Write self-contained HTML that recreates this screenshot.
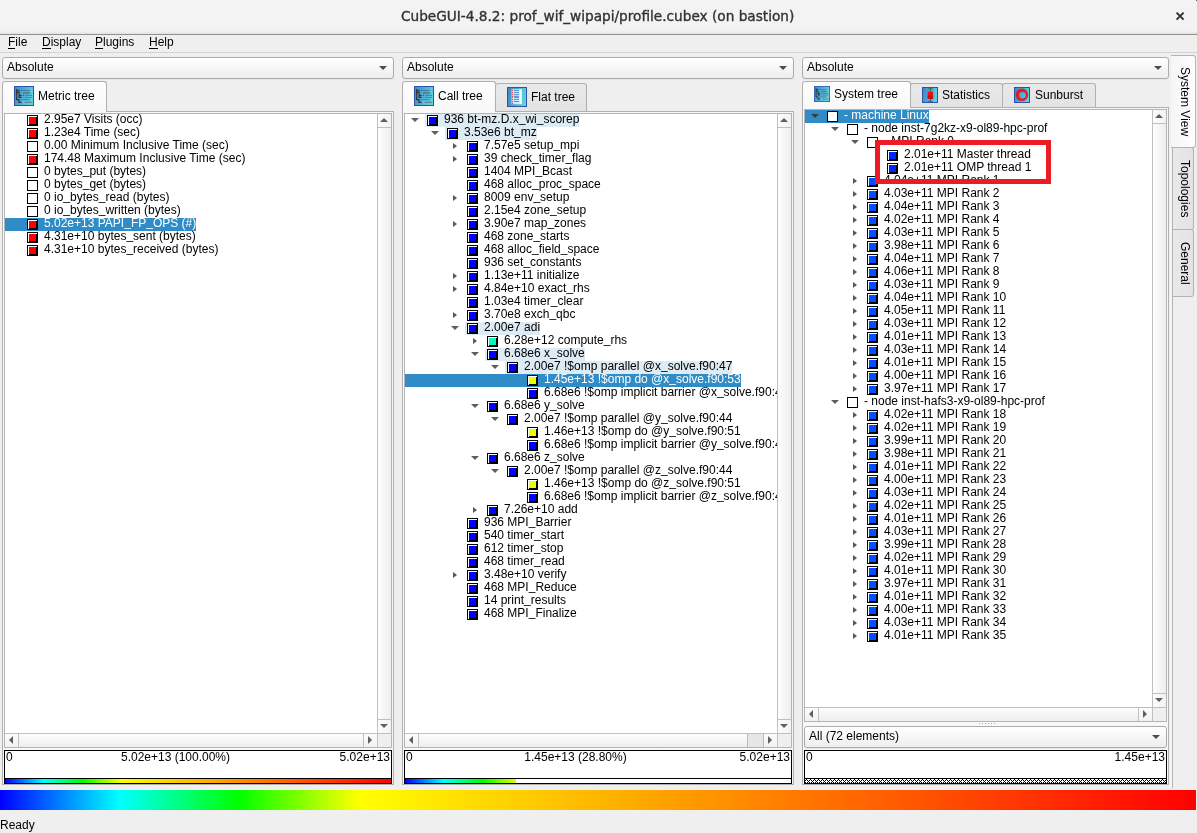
<!DOCTYPE html><html><head><meta charset="utf-8"><title>CubeGUI-4.8.2</title><style>
*{box-sizing:border-box}
html,body{margin:0;padding:0}
body{width:1197px;height:833px;position:relative;overflow:hidden;background:#efefef;
 font:12px "Liberation Sans",sans-serif;color:#000}
div,span,i,b,svg{position:absolute}
#root{left:0;top:0;width:1197px;height:833px;will-change:transform}
.t{white-space:pre;line-height:13px;height:13px}
em{font-style:normal;position:relative;top:-1px}
u{text-decoration:none;border-bottom:1px solid #000;display:inline-block;line-height:11px;height:12px}
.titlebar{left:0;top:0;width:1197px;height:35px;background:linear-gradient(#f3f3f3 0,#f3f3f3 31px,#ececec 32px,#e2e2e2 34px,#e2e2e2 100%)}
.tline{left:0;top:34px;width:1197px;height:1px;background:#91928b}
.title{left:401px;top:6px;font:13.66px "DejaVu Sans","Liberation Sans",sans-serif;color:#2e3436;white-space:pre;line-height:20px;-webkit-text-stroke:0.35px #2e3436}
.mline{left:0;top:52px;width:1197px;height:1px;background:#d4d4d4}
.combo{border:1px solid #ababab;border-radius:3px;background:linear-gradient(#ffffff,#eeeeee);box-shadow:0 1px 0 #e6e6e6}
.pane{border:1px solid #b0b0b0;background:#f8f8f8}
.frame{border:1px solid #b4b4b4;background:#fff;overflow:hidden}
.tab{border:1px solid #b0b0b0;border-bottom:none;border-radius:3px 3px 0 0}
.tab.sel{background:linear-gradient(#fdfdfd,#f8f8f8)}
.tab.in{background:linear-gradient(#e9e9e9,#e3e3e3)}
.ic{width:11px;height:11px;background:linear-gradient(var(--c),var(--c)) 2px 2px/7px 7px no-repeat,linear-gradient(#000,#000) 2px 2px/8px 8px no-repeat,linear-gradient(#fff,#fff) 1px 1px/9px 9px no-repeat,#000}
.ie{width:11px;height:11px;border:1px solid #000;background:#fff}
.hl{background:#ddebf5;height:13px}
.sel{background:#308cc6;height:13px}
.w{color:#fff}
.ad{width:0;height:0;border-left:4px solid transparent;border-right:4px solid transparent;border-top:4px solid #5e5e5e}
.ar{width:0;height:0;border-top:3.5px solid transparent;border-bottom:3.5px solid transparent;border-left:4px solid #595959}
.al{width:0;height:0;border-top:4px solid transparent;border-bottom:4px solid transparent;border-right:4px solid #606060}
.au{width:0;height:0;border-left:4px solid transparent;border-right:4px solid transparent;border-bottom:4px solid #606060}
.adk{border-top-color:#4d4d4d}
.sb{background:#c0c0c0}
.vbox{border:1px solid #000;background:#fff;height:34px}
.vbar{left:0;bottom:0;height:5px;border-top:1px solid #000}
.vt{top:0;white-space:pre;line-height:13px}
.rot{white-space:pre;line-height:14px;transform-origin:0 0;transform:rotate(90deg)}
</style></head><body><div id="root">
<div class="titlebar"></div><div class="tline"></div>
<span class="title">CubeGUI-4.8.2: prof_wif_wipapi/profile.cubex (on bastion)</span>
<svg style="left:1174px;top:10px" width="12" height="12" viewBox="0 0 12 12"><path d="M2.6 2.6 L9.6 9.6 M9.6 2.6 L2.6 9.6" stroke="#2e3436" stroke-width="2" fill="none"/></svg>
<div style="left:1196px;top:0;width:1px;height:1px;background:#5a5a5a"></div><div style="left:0;top:0;width:1px;height:1px;background:#fff"></div>
<span class="t " style="left:8px;top:36px;"><u>F</u>ile</span>
<span class="t " style="left:42px;top:36px;"><u>D</u>isplay</span>
<span class="t " style="left:95px;top:36px;"><u>P</u>lugins</span>
<span class="t " style="left:149px;top:36px;"><u>H</u>elp</span>
<div class="mline"></div>
<div class="combo" style="left:2px;top:57px;width:392px;height:22px"></div>
<span class="t " style="left:7px;top:61px;">Absolute</span>
<i class="ad adk" style="left:379px;top:66px"></i>
<div class="pane" style="left:2px;top:111px;width:392px;height:674px"></div>
<div class="tab sel" style="left:2px;top:81px;width:105px;height:31px"></div>
<svg style="left:14px;top:86px" width="20" height="20" viewBox="0 0 20 20"><defs><linearGradient id="g1" x1="0" y1="0" x2="1" y2="0.3"><stop offset="0" stop-color="#3a88cc"/><stop offset="1" stop-color="#5fcfe0"/></linearGradient></defs><rect x="0.5" y="0.5" width="19" height="19" fill="url(#g1)" stroke="#2b55ad"/><path d="M2.6 3 V13.6 H4.9 V16.3 H7.6 M2.6 4.5 H5.6 M2.6 6.3 H5.1 V11.4 H7.7 M5.1 9.4 H7.5" stroke="#33363c" stroke-width="1.25" fill="none"/><rect x="9" y="6.1" width="7" height="1.8" fill="#5b8da6" opacity="0.85"/><g stroke="#4f6873" stroke-width="0.9" opacity="0.85"><path d="M9 4.5H16M9 7H16M11 9.4H18M11 11.4H18M9 13.6H16M11 16.3H18"/></g><rect x="6.9" y="4" width="1.1" height="1.1" fill="#3040e0"/><rect x="6.8" y="6.2" width="1.3" height="1.6" fill="#30d060"/><rect x="8.9" y="8.9" width="1.1" height="1.1" fill="#3848d8"/><rect x="8.8" y="10.8" width="1.3" height="1.3" fill="#20e040"/><rect x="6.9" y="13" width="1.1" height="1.3" fill="#d03050"/><rect x="8.9" y="15.7" width="1.1" height="1.3" fill="#e0c030"/></svg>
<span class="t " style="left:38px;top:90px;">Metric tree</span>
<div class="frame" style="left:4px;top:113px;width:388px;height:635px"></div>
<div style="left:5px;top:114px;width:372px;height:145px;overflow:hidden">
<i class="ic" style="left:22px;top:1px;--c:#ff0000"></i>
<span class="t" style="left:39px;top:-1px">2.95e7 Visits (occ)</span>
<i class="ic" style="left:22px;top:14px;--c:#ff0000"></i>
<span class="t" style="left:39px;top:12px">1.23e4 Time (sec)</span>
<i class="ie" style="left:22px;top:27px"></i>
<span class="t" style="left:39px;top:25px">0.00 Minimum Inclusive Time (sec)</span>
<i class="ic" style="left:22px;top:40px;--c:#ff0000"></i>
<span class="t" style="left:39px;top:38px">174.48 Maximum Inclusive Time (sec)</span>
<i class="ie" style="left:22px;top:53px"></i>
<span class="t" style="left:39px;top:51px">0 bytes<em>_</em>put (bytes)</span>
<i class="ie" style="left:22px;top:66px"></i>
<span class="t" style="left:39px;top:64px">0 bytes<em>_</em>get (bytes)</span>
<i class="ie" style="left:22px;top:79px"></i>
<span class="t" style="left:39px;top:77px">0 io<em>_</em>bytes<em>_</em>read (bytes)</span>
<i class="ie" style="left:22px;top:92px"></i>
<span class="t" style="left:39px;top:90px">0 io<em>_</em>bytes<em>_</em>written (bytes)</span>
<div class="sel" style="left:0;top:104px;width:191px"></div>
<i class="ic" style="left:22px;top:105px;--c:#ff0000"></i>
<span class="t w" style="left:39px;top:103px">5.02e+13 PAPI<em>_</em>FP<em>_</em>OPS (#)</span>
<i class="ic" style="left:22px;top:118px;--c:#ff0000"></i>
<span class="t" style="left:39px;top:116px">4.31e+10 bytes<em>_</em>sent (bytes)</span>
<i class="ic" style="left:22px;top:131px;--c:#ff0000"></i>
<span class="t" style="left:39px;top:129px">4.31e+10 bytes<em>_</em>received (bytes)</span>
</div>
<div style="left:377px;top:114px;width:14px;height:619px;background:linear-gradient(to right,#fdfdfd,#eeeeee);border-left:1px solid #c0c0c0"></div>
<div style="left:378px;top:114px;width:13px;height:14px;background:linear-gradient(to right,#fcfcfc,#f2f2f2);border-bottom:1px solid #c0c0c0"></div>
<i class="au" style="left:380px;top:118px"></i>
<div style="left:378px;top:719px;width:13px;height:14px;background:linear-gradient(to right,#fcfcfc,#f2f2f2);border-top:1px solid #c0c0c0"></div>
<i class="ad" style="left:380px;top:724px;border-top-color:#606060"></i>
<div style="left:5px;top:733px;width:372px;height:14px;background:linear-gradient(#fdfdfd,#eeeeee);border-top:1px solid #c0c0c0"></div>
<div style="left:5px;top:734px;width:14px;height:13px;background:linear-gradient(#fcfcfc,#f2f2f2);border-right:1px solid #c0c0c0"></div>
<i class="al" style="left:9px;top:736px"></i>
<div style="left:363px;top:734px;width:14px;height:13px;background:linear-gradient(#fcfcfc,#f2f2f2);border-left:1px solid #c0c0c0"></div>
<i class="ar" style="left:368px;top:736px;border-left-color:#606060;border-top-width:4px;border-bottom-width:4px"></i>
<div style="left:377px;top:733px;width:14px;height:14px;background:#efefef;border-left:1px solid #c0c0c0;border-top:1px solid #c0c0c0"></div>
<div class="vbox" style="left:4px;top:750px;width:388px">
<span class="vt" style="left:1px">0</span>
<span class="vt" style="left:0;width:341px;text-align:center">5.02e+13 (100.00%)</span>
<span class="vt" style="right:1px">5.02e+13</span>
<div class="vbar" style="width:386px;background:#fff"></div>
<div style="left:0;bottom:0;height:4px;width:386px;background:linear-gradient(to right,#0000ff 0%,#00ffff 10%,#00ff00 20%,#ffff00 30%,#ff0000 100%) 0 0/386px 100% no-repeat"></div>
</div>
<div class="combo" style="left:402px;top:57px;width:392px;height:22px"></div>
<span class="t " style="left:407px;top:61px;">Absolute</span>
<i class="ad adk" style="left:779px;top:66px"></i>
<div class="pane" style="left:402px;top:111px;width:392px;height:674px"></div>
<div class="tab in" style="left:495px;top:83px;width:92px;height:28px"></div>
<div class="tab sel" style="left:402px;top:81px;width:94px;height:31px"></div>
<svg style="left:414px;top:86px" width="20" height="20" viewBox="0 0 20 20"><defs><linearGradient id="g2" x1="0" y1="0" x2="1" y2="0.3"><stop offset="0" stop-color="#3a88cc"/><stop offset="1" stop-color="#5fcfe0"/></linearGradient></defs><rect x="0.5" y="0.5" width="19" height="19" fill="url(#g2)" stroke="#2b55ad"/><path d="M2.6 3 V13.6 H4.9 V16.3 H7.6 M2.6 4.5 H5.6 M2.6 6.3 H5.1 V11.4 H7.7 M5.1 9.4 H7.5" stroke="#33363c" stroke-width="1.25" fill="none"/><rect x="9" y="6.1" width="7" height="1.8" fill="#5b8da6" opacity="0.85"/><g stroke="#4f6873" stroke-width="0.9" opacity="0.85"><path d="M9 4.5H16M9 7H16M11 9.4H18M11 11.4H18M9 13.6H16M11 16.3H18"/></g><rect x="6.9" y="4" width="1.1" height="1.1" fill="#3040e0"/><rect x="6.8" y="6.2" width="1.3" height="1.6" fill="#30d060"/><rect x="8.9" y="8.9" width="1.1" height="1.1" fill="#3848d8"/><rect x="8.8" y="10.8" width="1.3" height="1.3" fill="#20e040"/><rect x="6.9" y="13" width="1.1" height="1.3" fill="#d03050"/><rect x="8.9" y="15.7" width="1.1" height="1.3" fill="#e0c030"/></svg>
<span class="t " style="left:438px;top:90px;">Call tree</span>
<svg style="left:507px;top:87px" width="20" height="20" viewBox="0 0 20 20"><defs><linearGradient id="g3" x1="0" y1="0" x2="1" y2="0.2"><stop offset="0" stop-color="#3a84c8"/><stop offset="1" stop-color="#60d0e0"/></linearGradient></defs><rect x="0.5" y="0.5" width="19" height="19" fill="url(#g3)" stroke="#2b55ad"/><rect x="4.6" y="2.2" width="10.4" height="15" fill="#d6eaf8" opacity="0.95"/><rect x="12.6" y="2.6" width="2.2" height="14" fill="#f4fafe"/><g stroke="#3d8fd8" stroke-width="0.9"><path d="M7 3.4H12M7 5.5H12M7 7.6H12M7 9.4H12M7 10.4H12M7 12.4H12M7 14.5H12"/></g><g fill="#f04040"><rect x="5" y="2.9" width="1.1" height="1.1"/><rect x="5" y="5" width="1.1" height="1.1"/><rect x="5" y="7.1" width="1.1" height="1.1"/><rect x="5" y="9" width="1.1" height="1.6"/><rect x="5" y="11.9" width="1.1" height="1.1"/><rect x="5" y="14" width="1.1" height="1.1"/><rect x="5" y="15.9" width="1.1" height="1.1"/></g></svg>
<span class="t " style="left:531px;top:91px;">Flat tree</span>
<div class="frame" style="left:404px;top:113px;width:388px;height:635px"></div>
<div style="left:405px;top:114px;width:372px;height:509px;overflow:hidden">
<div class="hl" style="left:20px;top:0px;width:154px"></div>
<i class="ad" style="left:6px;top:4.4px;"></i>
<i class="ic" style="left:22px;top:1px;--c:#0000ff"></i>
<span class="t" style="left:39px;top:-1px">936 bt-mz.D.x<em>_</em>wi<em>_</em>scorep</span>
<div class="hl" style="left:40px;top:13px;width:92px"></div>
<i class="ad" style="left:26px;top:17.4px;"></i>
<i class="ic" style="left:42px;top:14px;--c:#0000ff"></i>
<span class="t" style="left:59px;top:12px">3.53e6 bt<em>_</em>mz</span>
<i class="ar" style="left:48px;top:29px"></i>
<i class="ic" style="left:62px;top:27px;--c:#0000ff"></i>
<span class="t" style="left:79px;top:25px">7.57e5 setup<em>_</em>mpi</span>
<i class="ar" style="left:48px;top:42px"></i>
<i class="ic" style="left:62px;top:40px;--c:#0000ff"></i>
<span class="t" style="left:79px;top:38px">39 check<em>_</em>timer<em>_</em>flag</span>
<i class="ic" style="left:62px;top:53px;--c:#0000ff"></i>
<span class="t" style="left:79px;top:51px">1404 MPI<em>_</em>Bcast</span>
<i class="ic" style="left:62px;top:66px;--c:#0000ff"></i>
<span class="t" style="left:79px;top:64px">468 alloc<em>_</em>proc<em>_</em>space</span>
<i class="ar" style="left:48px;top:81px"></i>
<i class="ic" style="left:62px;top:79px;--c:#0000ff"></i>
<span class="t" style="left:79px;top:77px">8009 env<em>_</em>setup</span>
<i class="ic" style="left:62px;top:92px;--c:#0000ff"></i>
<span class="t" style="left:79px;top:90px">2.15e4 zone<em>_</em>setup</span>
<i class="ar" style="left:48px;top:107px"></i>
<i class="ic" style="left:62px;top:105px;--c:#0000ff"></i>
<span class="t" style="left:79px;top:103px">3.90e7 map<em>_</em>zones</span>
<i class="ic" style="left:62px;top:118px;--c:#0000ff"></i>
<span class="t" style="left:79px;top:116px">468 zone<em>_</em>starts</span>
<i class="ic" style="left:62px;top:131px;--c:#0000ff"></i>
<span class="t" style="left:79px;top:129px">468 alloc<em>_</em>field<em>_</em>space</span>
<i class="ic" style="left:62px;top:144px;--c:#0000ff"></i>
<span class="t" style="left:79px;top:142px">936 set<em>_</em>constants</span>
<i class="ar" style="left:48px;top:159px"></i>
<i class="ic" style="left:62px;top:157px;--c:#0000ff"></i>
<span class="t" style="left:79px;top:155px">1.13e+11 initialize</span>
<i class="ar" style="left:48px;top:172px"></i>
<i class="ic" style="left:62px;top:170px;--c:#0000ff"></i>
<span class="t" style="left:79px;top:168px">4.84e+10 exact<em>_</em>rhs</span>
<i class="ic" style="left:62px;top:183px;--c:#0000ff"></i>
<span class="t" style="left:79px;top:181px">1.03e4 timer<em>_</em>clear</span>
<i class="ar" style="left:48px;top:198px"></i>
<i class="ic" style="left:62px;top:196px;--c:#0000ff"></i>
<span class="t" style="left:79px;top:194px">3.70e8 exch<em>_</em>qbc</span>
<div class="hl" style="left:60px;top:208px;width:75px"></div>
<i class="ad" style="left:46px;top:212.4px;"></i>
<i class="ic" style="left:62px;top:209px;--c:#0000ff"></i>
<span class="t" style="left:79px;top:207px">2.00e7 adi</span>
<i class="ar" style="left:68px;top:224px"></i>
<i class="ic" style="left:82px;top:222px;--c:#00ffbf"></i>
<span class="t" style="left:99px;top:220px">6.28e+12 compute<em>_</em>rhs</span>
<div class="hl" style="left:80px;top:234px;width:100px"></div>
<i class="ad" style="left:66px;top:238.4px;"></i>
<i class="ic" style="left:82px;top:235px;--c:#0000ff"></i>
<span class="t" style="left:99px;top:233px">6.68e6 x<em>_</em>solve</span>
<div class="hl" style="left:100px;top:247px;width:227px"></div>
<i class="ad" style="left:86px;top:251.4px;"></i>
<i class="ic" style="left:102px;top:248px;--c:#0000ff"></i>
<span class="t" style="left:119px;top:246px">2.00e7 !$omp parallel @x<em>_</em>solve.f90:47</span>
<div class="sel" style="left:0;top:260px;width:336px"></div>
<i class="ic" style="left:122px;top:261px;--c:#e6ff00"></i>
<span class="t w" style="left:139px;top:259px">1.45e+13 !$omp do @x<em>_</em>solve.f90:53</span>
<i class="ic" style="left:122px;top:274px;--c:#0000ff"></i>
<span class="t" style="left:139px;top:272px">6.68e6 !$omp implicit barrier @x<em>_</em>solve.f90:4</span>
<i class="ad" style="left:66px;top:290.4px;"></i>
<i class="ic" style="left:82px;top:287px;--c:#0000ff"></i>
<span class="t" style="left:99px;top:285px">6.68e6 y<em>_</em>solve</span>
<i class="ad" style="left:86px;top:303.4px;"></i>
<i class="ic" style="left:102px;top:300px;--c:#0000ff"></i>
<span class="t" style="left:119px;top:298px">2.00e7 !$omp parallel @y<em>_</em>solve.f90:44</span>
<i class="ic" style="left:122px;top:313px;--c:#e6ff00"></i>
<span class="t" style="left:139px;top:311px">1.46e+13 !$omp do @y<em>_</em>solve.f90:51</span>
<i class="ic" style="left:122px;top:326px;--c:#0000ff"></i>
<span class="t" style="left:139px;top:324px">6.68e6 !$omp implicit barrier @y<em>_</em>solve.f90:4</span>
<i class="ad" style="left:66px;top:342.4px;"></i>
<i class="ic" style="left:82px;top:339px;--c:#0000ff"></i>
<span class="t" style="left:99px;top:337px">6.68e6 z<em>_</em>solve</span>
<i class="ad" style="left:86px;top:355.4px;"></i>
<i class="ic" style="left:102px;top:352px;--c:#0000ff"></i>
<span class="t" style="left:119px;top:350px">2.00e7 !$omp parallel @z<em>_</em>solve.f90:44</span>
<i class="ic" style="left:122px;top:365px;--c:#e6ff00"></i>
<span class="t" style="left:139px;top:363px">1.46e+13 !$omp do @z<em>_</em>solve.f90:51</span>
<i class="ic" style="left:122px;top:378px;--c:#0000ff"></i>
<span class="t" style="left:139px;top:376px">6.68e6 !$omp implicit barrier @z<em>_</em>solve.f90:4</span>
<i class="ar" style="left:68px;top:393px"></i>
<i class="ic" style="left:82px;top:391px;--c:#0000ff"></i>
<span class="t" style="left:99px;top:389px">7.26e+10 add</span>
<i class="ic" style="left:62px;top:404px;--c:#0000ff"></i>
<span class="t" style="left:79px;top:402px">936 MPI<em>_</em>Barrier</span>
<i class="ic" style="left:62px;top:417px;--c:#0000ff"></i>
<span class="t" style="left:79px;top:415px">540 timer<em>_</em>start</span>
<i class="ic" style="left:62px;top:430px;--c:#0000ff"></i>
<span class="t" style="left:79px;top:428px">612 timer<em>_</em>stop</span>
<i class="ic" style="left:62px;top:443px;--c:#0000ff"></i>
<span class="t" style="left:79px;top:441px">468 timer<em>_</em>read</span>
<i class="ar" style="left:48px;top:458px"></i>
<i class="ic" style="left:62px;top:456px;--c:#0000ff"></i>
<span class="t" style="left:79px;top:454px">3.48e+10 verify</span>
<i class="ic" style="left:62px;top:469px;--c:#0000ff"></i>
<span class="t" style="left:79px;top:467px">468 MPI<em>_</em>Reduce</span>
<i class="ic" style="left:62px;top:482px;--c:#0000ff"></i>
<span class="t" style="left:79px;top:480px">14 print<em>_</em>results</span>
<i class="ic" style="left:62px;top:495px;--c:#0000ff"></i>
<span class="t" style="left:79px;top:493px">468 MPI<em>_</em>Finalize</span>
</div>
<div style="left:777px;top:114px;width:14px;height:619px;background:linear-gradient(to right,#fdfdfd,#eeeeee);border-left:1px solid #c0c0c0"></div>
<div style="left:778px;top:114px;width:13px;height:14px;background:linear-gradient(to right,#fcfcfc,#f2f2f2);border-bottom:1px solid #c0c0c0"></div>
<i class="au" style="left:780px;top:118px"></i>
<div style="left:778px;top:719px;width:13px;height:14px;background:linear-gradient(to right,#fcfcfc,#f2f2f2);border-top:1px solid #c0c0c0"></div>
<i class="ad" style="left:780px;top:724px;border-top-color:#606060"></i>
<div style="left:405px;top:733px;width:372px;height:14px;background:linear-gradient(#fdfdfd,#eeeeee);border-top:1px solid #c0c0c0"></div>
<div style="left:405px;top:734px;width:14px;height:13px;background:linear-gradient(#fcfcfc,#f2f2f2);border-right:1px solid #c0c0c0"></div>
<i class="al" style="left:409px;top:736px"></i>
<div style="left:763px;top:734px;width:14px;height:13px;background:linear-gradient(#fcfcfc,#f2f2f2);border-left:1px solid #c0c0c0"></div>
<i class="ar" style="left:768px;top:736px;border-left-color:#606060;border-top-width:4px;border-bottom-width:4px"></i>
<div style="left:747px;top:734px;width:17px;height:13px;background:#e6e6e6;border-left:1px solid #bdbdbd;border-right:1px solid #bdbdbd"></div>
<div style="left:777px;top:733px;width:14px;height:14px;background:#efefef;border-left:1px solid #c0c0c0;border-top:1px solid #c0c0c0"></div>
<div class="vbox" style="left:404px;top:750px;width:388px">
<span class="vt" style="left:1px">0</span>
<span class="vt" style="left:0;width:341px;text-align:center">1.45e+13 (28.80%)</span>
<span class="vt" style="right:1px">5.02e+13</span>
<div class="vbar" style="width:386px;background:#fff"></div>
<div style="left:0;bottom:0;height:4px;width:111px;background:linear-gradient(to right,#0000ff 0%,#00ffff 10%,#00ff00 20%,#ffff00 30%,#ff0000 100%) 0 0/386px 100% no-repeat"></div>
</div>
<div class="combo" style="left:802px;top:57px;width:367px;height:22px"></div>
<span class="t " style="left:807px;top:61px;">Absolute</span>
<i class="ad adk" style="left:1154px;top:66px"></i>
<div class="pane" style="left:802px;top:107px;width:367px;height:678px"></div>
<div class="tab in" style="left:910px;top:83px;width:93px;height:24px"></div>
<div class="tab in" style="left:1002px;top:83px;width:94px;height:24px"></div>
<div class="tab sel" style="left:802px;top:81px;width:109px;height:27px"></div>
<svg style="left:814px;top:86px" width="16" height="16" viewBox="0 0 20 20"><defs><linearGradient id="g4" x1="0" y1="0" x2="1" y2="0.3"><stop offset="0" stop-color="#3a88cc"/><stop offset="1" stop-color="#5fcfe0"/></linearGradient></defs><rect x="0.5" y="0.5" width="19" height="19" fill="url(#g4)" stroke="#2b55ad"/><path d="M2.6 3 V13.6 H4.9 V16.3 H7.6 M2.6 4.5 H5.6 M2.6 6.3 H5.1 V11.4 H7.7 M5.1 9.4 H7.5" stroke="#33363c" stroke-width="1.25" fill="none"/><rect x="9" y="6.1" width="7" height="1.8" fill="#5b8da6" opacity="0.85"/><g stroke="#4f6873" stroke-width="0.9" opacity="0.85"><path d="M9 4.5H16M9 7H16M11 9.4H18M11 11.4H18M9 13.6H16M11 16.3H18"/></g><rect x="6.9" y="4" width="1.1" height="1.1" fill="#3040e0"/><rect x="6.8" y="6.2" width="1.3" height="1.6" fill="#30d060"/><rect x="8.9" y="8.9" width="1.1" height="1.1" fill="#3848d8"/><rect x="8.8" y="10.8" width="1.3" height="1.3" fill="#20e040"/><rect x="6.9" y="13" width="1.1" height="1.3" fill="#d03050"/><rect x="8.9" y="15.7" width="1.1" height="1.3" fill="#e0c030"/></svg>
<span class="t " style="left:834px;top:88px;">System tree</span>
<svg style="left:922px;top:87px" width="16" height="16" viewBox="0 0 16 16"><defs><linearGradient id="g5" x1="0" y1="0" x2="1" y2="0.2"><stop offset="0" stop-color="#3a84c8"/><stop offset="1" stop-color="#5fcfe0"/></linearGradient></defs><rect x="0.5" y="0.5" width="15" height="15" fill="url(#g5)" stroke="#2b55ad"/><path d="M8.5 1.5V14.5M6.2 1.8H10.8M6.2 14.3H10.8" stroke="#4a5a66" stroke-width="0.9" fill="none"/><rect x="5.7" y="4.6" width="5.4" height="7.2" fill="#f01010"/><rect x="5.7" y="8.4" width="5.4" height="3.4" fill="#c80c0c"/></svg>
<span class="t " style="left:942px;top:89px;">Statistics</span>
<svg style="left:1014px;top:87px" width="16" height="16" viewBox="0 0 16 16"><defs><linearGradient id="g6" x1="0" y1="0" x2="1" y2="0.2"><stop offset="0" stop-color="#3a84c8"/><stop offset="1" stop-color="#5fcfe0"/></linearGradient></defs><rect x="0.5" y="0.5" width="15" height="15" fill="url(#g6)" stroke="#2b55ad"/><path fill-rule="evenodd" fill="#e9141c" opacity="0.93" d="M1.6 7.8a6.3 6.3 0 1 0 12.6 0a6.3 6.3 0 1 0 -12.6 0zM5.1 8.2a3.3 3.3 0 1 0 6.6 0a3.3 3.3 0 1 0 -6.6 0z"/></svg>
<span class="t " style="left:1035px;top:89px;">Sunburst</span>
<div class="frame" style="left:804px;top:109px;width:363px;height:613px"></div>
<div style="left:805px;top:110px;width:347px;height:535px;overflow:hidden">
<div class="sel" style="left:0;top:0px;width:124px"></div>
<i class="ad" style="left:6px;top:4.4px;border-top-color:#3a3a3a"></i>
<i class="ie" style="left:22px;top:1px"></i>
<span class="t w" style="left:39px;top:-1px">- machine Linux</span>
<i class="ad" style="left:26px;top:17.4px;"></i>
<i class="ie" style="left:42px;top:14px"></i>
<span class="t" style="left:59px;top:12px">- node inst-7g2kz-x9-ol89-hpc-prof</span>
<i class="ad" style="left:46px;top:30.4px;"></i>
<i class="ie" style="left:62px;top:27px"></i>
<span class="t" style="left:79px;top:25px">- MPI Rank 0</span>
<i class="ic" style="left:82px;top:40px;--c:#0024ff"></i>
<span class="t" style="left:99px;top:38px">2.01e+11 Master thread</span>
<i class="ic" style="left:82px;top:53px;--c:#0024ff"></i>
<span class="t" style="left:99px;top:51px">2.01e+11 OMP thread 1</span>
<i class="ar" style="left:48px;top:68px"></i>
<i class="ic" style="left:62px;top:66px;--c:#0050ff"></i>
<span class="t" style="left:79px;top:64px">4.04e+11 MPI Rank 1</span>
<i class="ar" style="left:48px;top:81px"></i>
<i class="ic" style="left:62px;top:79px;--c:#0050ff"></i>
<span class="t" style="left:79px;top:77px">4.03e+11 MPI Rank 2</span>
<i class="ar" style="left:48px;top:94px"></i>
<i class="ic" style="left:62px;top:92px;--c:#0050ff"></i>
<span class="t" style="left:79px;top:90px">4.04e+11 MPI Rank 3</span>
<i class="ar" style="left:48px;top:107px"></i>
<i class="ic" style="left:62px;top:105px;--c:#0050ff"></i>
<span class="t" style="left:79px;top:103px">4.02e+11 MPI Rank 4</span>
<i class="ar" style="left:48px;top:120px"></i>
<i class="ic" style="left:62px;top:118px;--c:#0050ff"></i>
<span class="t" style="left:79px;top:116px">4.03e+11 MPI Rank 5</span>
<i class="ar" style="left:48px;top:133px"></i>
<i class="ic" style="left:62px;top:131px;--c:#0050ff"></i>
<span class="t" style="left:79px;top:129px">3.98e+11 MPI Rank 6</span>
<i class="ar" style="left:48px;top:146px"></i>
<i class="ic" style="left:62px;top:144px;--c:#0050ff"></i>
<span class="t" style="left:79px;top:142px">4.04e+11 MPI Rank 7</span>
<i class="ar" style="left:48px;top:159px"></i>
<i class="ic" style="left:62px;top:157px;--c:#0050ff"></i>
<span class="t" style="left:79px;top:155px">4.06e+11 MPI Rank 8</span>
<i class="ar" style="left:48px;top:172px"></i>
<i class="ic" style="left:62px;top:170px;--c:#0050ff"></i>
<span class="t" style="left:79px;top:168px">4.03e+11 MPI Rank 9</span>
<i class="ar" style="left:48px;top:185px"></i>
<i class="ic" style="left:62px;top:183px;--c:#0050ff"></i>
<span class="t" style="left:79px;top:181px">4.04e+11 MPI Rank 10</span>
<i class="ar" style="left:48px;top:198px"></i>
<i class="ic" style="left:62px;top:196px;--c:#0050ff"></i>
<span class="t" style="left:79px;top:194px">4.05e+11 MPI Rank 11</span>
<i class="ar" style="left:48px;top:211px"></i>
<i class="ic" style="left:62px;top:209px;--c:#0050ff"></i>
<span class="t" style="left:79px;top:207px">4.03e+11 MPI Rank 12</span>
<i class="ar" style="left:48px;top:224px"></i>
<i class="ic" style="left:62px;top:222px;--c:#0050ff"></i>
<span class="t" style="left:79px;top:220px">4.01e+11 MPI Rank 13</span>
<i class="ar" style="left:48px;top:237px"></i>
<i class="ic" style="left:62px;top:235px;--c:#0050ff"></i>
<span class="t" style="left:79px;top:233px">4.03e+11 MPI Rank 14</span>
<i class="ar" style="left:48px;top:250px"></i>
<i class="ic" style="left:62px;top:248px;--c:#0050ff"></i>
<span class="t" style="left:79px;top:246px">4.01e+11 MPI Rank 15</span>
<i class="ar" style="left:48px;top:263px"></i>
<i class="ic" style="left:62px;top:261px;--c:#0050ff"></i>
<span class="t" style="left:79px;top:259px">4.00e+11 MPI Rank 16</span>
<i class="ar" style="left:48px;top:276px"></i>
<i class="ic" style="left:62px;top:274px;--c:#0050ff"></i>
<span class="t" style="left:79px;top:272px">3.97e+11 MPI Rank 17</span>
<i class="ad" style="left:26px;top:290.4px;"></i>
<i class="ie" style="left:42px;top:287px"></i>
<span class="t" style="left:59px;top:285px">- node inst-hafs3-x9-ol89-hpc-prof</span>
<i class="ar" style="left:48px;top:302px"></i>
<i class="ic" style="left:62px;top:300px;--c:#0050ff"></i>
<span class="t" style="left:79px;top:298px">4.02e+11 MPI Rank 18</span>
<i class="ar" style="left:48px;top:315px"></i>
<i class="ic" style="left:62px;top:313px;--c:#0050ff"></i>
<span class="t" style="left:79px;top:311px">4.02e+11 MPI Rank 19</span>
<i class="ar" style="left:48px;top:328px"></i>
<i class="ic" style="left:62px;top:326px;--c:#0050ff"></i>
<span class="t" style="left:79px;top:324px">3.99e+11 MPI Rank 20</span>
<i class="ar" style="left:48px;top:341px"></i>
<i class="ic" style="left:62px;top:339px;--c:#0050ff"></i>
<span class="t" style="left:79px;top:337px">3.98e+11 MPI Rank 21</span>
<i class="ar" style="left:48px;top:354px"></i>
<i class="ic" style="left:62px;top:352px;--c:#0050ff"></i>
<span class="t" style="left:79px;top:350px">4.01e+11 MPI Rank 22</span>
<i class="ar" style="left:48px;top:367px"></i>
<i class="ic" style="left:62px;top:365px;--c:#0050ff"></i>
<span class="t" style="left:79px;top:363px">4.00e+11 MPI Rank 23</span>
<i class="ar" style="left:48px;top:380px"></i>
<i class="ic" style="left:62px;top:378px;--c:#0050ff"></i>
<span class="t" style="left:79px;top:376px">4.03e+11 MPI Rank 24</span>
<i class="ar" style="left:48px;top:393px"></i>
<i class="ic" style="left:62px;top:391px;--c:#0050ff"></i>
<span class="t" style="left:79px;top:389px">4.02e+11 MPI Rank 25</span>
<i class="ar" style="left:48px;top:406px"></i>
<i class="ic" style="left:62px;top:404px;--c:#0050ff"></i>
<span class="t" style="left:79px;top:402px">4.01e+11 MPI Rank 26</span>
<i class="ar" style="left:48px;top:419px"></i>
<i class="ic" style="left:62px;top:417px;--c:#0050ff"></i>
<span class="t" style="left:79px;top:415px">4.03e+11 MPI Rank 27</span>
<i class="ar" style="left:48px;top:432px"></i>
<i class="ic" style="left:62px;top:430px;--c:#0050ff"></i>
<span class="t" style="left:79px;top:428px">3.99e+11 MPI Rank 28</span>
<i class="ar" style="left:48px;top:445px"></i>
<i class="ic" style="left:62px;top:443px;--c:#0050ff"></i>
<span class="t" style="left:79px;top:441px">4.02e+11 MPI Rank 29</span>
<i class="ar" style="left:48px;top:458px"></i>
<i class="ic" style="left:62px;top:456px;--c:#0050ff"></i>
<span class="t" style="left:79px;top:454px">4.01e+11 MPI Rank 30</span>
<i class="ar" style="left:48px;top:471px"></i>
<i class="ic" style="left:62px;top:469px;--c:#0050ff"></i>
<span class="t" style="left:79px;top:467px">3.97e+11 MPI Rank 31</span>
<i class="ar" style="left:48px;top:484px"></i>
<i class="ic" style="left:62px;top:482px;--c:#0050ff"></i>
<span class="t" style="left:79px;top:480px">4.01e+11 MPI Rank 32</span>
<i class="ar" style="left:48px;top:497px"></i>
<i class="ic" style="left:62px;top:495px;--c:#0050ff"></i>
<span class="t" style="left:79px;top:493px">4.00e+11 MPI Rank 33</span>
<i class="ar" style="left:48px;top:510px"></i>
<i class="ic" style="left:62px;top:508px;--c:#0050ff"></i>
<span class="t" style="left:79px;top:506px">4.03e+11 MPI Rank 34</span>
<i class="ar" style="left:48px;top:523px"></i>
<i class="ic" style="left:62px;top:521px;--c:#0050ff"></i>
<span class="t" style="left:79px;top:519px">4.01e+11 MPI Rank 35</span>
</div>
<div style="left:1152px;top:110px;width:14px;height:597px;background:linear-gradient(to right,#fdfdfd,#eeeeee);border-left:1px solid #c0c0c0"></div>
<div style="left:1153px;top:110px;width:13px;height:14px;background:linear-gradient(to right,#fcfcfc,#f2f2f2);border-bottom:1px solid #c0c0c0"></div>
<i class="au" style="left:1155px;top:114px"></i>
<div style="left:1153px;top:693px;width:13px;height:14px;background:linear-gradient(to right,#fcfcfc,#f2f2f2);border-top:1px solid #c0c0c0"></div>
<i class="ad" style="left:1155px;top:698px;border-top-color:#606060"></i>
<div style="left:805px;top:707px;width:347px;height:14px;background:linear-gradient(#fdfdfd,#eeeeee);border-top:1px solid #c0c0c0"></div>
<div style="left:805px;top:708px;width:14px;height:13px;background:linear-gradient(#fcfcfc,#f2f2f2);border-right:1px solid #c0c0c0"></div>
<i class="al" style="left:809px;top:710px"></i>
<div style="left:1138px;top:708px;width:14px;height:13px;background:linear-gradient(#fcfcfc,#f2f2f2);border-left:1px solid #c0c0c0"></div>
<i class="ar" style="left:1143px;top:710px;border-left-color:#606060;border-top-width:4px;border-bottom-width:4px"></i>
<div style="left:1152px;top:707px;width:14px;height:14px;background:#efefef;border-left:1px solid #c0c0c0;border-top:1px solid #c0c0c0"></div>
<div style="left:875px;top:140px;width:176px;height:44px;border:5px solid #ed1c24"></div>
<div style="left:979px;top:723px;width:16px;height:1px;background:repeating-linear-gradient(to right,#a8a8a8 0,#a8a8a8 1px,transparent 1px,transparent 3px)"></div>
<div class="combo" style="left:804px;top:726px;width:363px;height:22px"></div>
<span class="t " style="left:809px;top:730px;">All (72 elements)</span>
<i class="ad adk" style="left:1152px;top:735px"></i>
<div class="vbox" style="left:804px;top:750px;width:363px">
<span class="vt" style="left:1px">0</span><span class="vt" style="right:1px">1.45e+13</span>
<div class="vbar" style="width:361px;background:#000"></div>
<svg style="left:0;bottom:0" width="361" height="4"><defs><pattern id="dp" width="4" height="4" patternUnits="userSpaceOnUse"><rect width="4" height="4" fill="#fff"/><path d="M1 0h1v1h-1zM0 1h1v1h-1zM2 1h1v1h-1zM3 2h1v1h-1zM0 3h1v1h-1zM2 3h1v1h-1z" fill="#000"/></pattern></defs><rect width="361" height="4" fill="url(#dp)"/></svg></div>
<div style="left:1172px;top:147px;width:22px;height:83px;border:1px solid #b4b4b4;border-left:none;border-radius:0 3px 3px 0;background:linear-gradient(to right,#e9e9e9,#e3e3e3)"></div>
<div style="left:1172px;top:229px;width:22px;height:68px;border:1px solid #b4b4b4;border-left:none;border-radius:0 3px 3px 0;background:linear-gradient(to right,#e9e9e9,#e3e3e3)"></div>
<div style="left:1171px;top:55px;width:25px;height:93px;border:1px solid #b4b4b4;border-left:none;border-radius:0 3px 3px 0;background:linear-gradient(to right,#f6f6f6,#fdfdfd)"></div>
<div style="left:1172px;top:147px;width:1px;height:641px;background:#b4b4b4"></div>
<div style="left:1169px;top:148px;width:3px;height:640px;background:#f4f4f4"></div>
<span class="rot" style="left:1192px;top:67px">System View</span>
<span class="rot" style="left:1192px;top:160px">Topologies</span>
<span class="rot" style="left:1192px;top:242px">General</span>
<div style="left:0;top:790px;width:1196px;height:20px;background:linear-gradient(to right,#0000ff 0%,#00ffff 10%,#00ff00 20%,#ffff00 30%,#ff0000 100%)"></div>
<span class="t " style="left:0px;top:819px;">Ready</span>
</div></body></html>
